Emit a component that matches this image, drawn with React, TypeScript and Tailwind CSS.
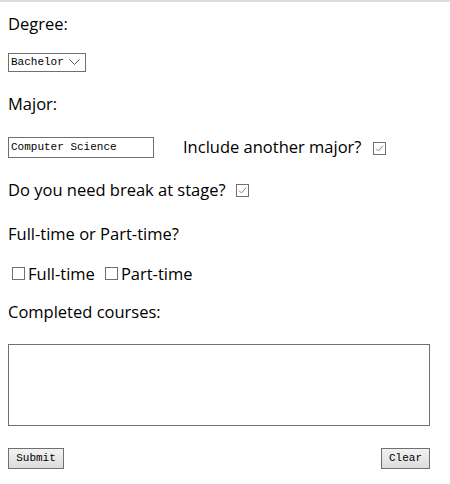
import React from 'react';

const Box: React.FC<{ checked?: boolean }> = ({ checked }) => (
    <span className="inline-flex items-center justify-center w-[13px] h-[13px] border border-[#707070] bg-white shrink-0">
        {checked && (
            <svg width="9" height="9" viewBox="0 0 9 9" fill="none">
                <path d="M1 4.5 L3.5 7 L8 1.5" stroke="#8a8a8a" strokeWidth="1" />
            </svg>
        )}
    </span>
);

const App: React.FC = () => {
    return (
        <div className="w-[450px] h-[484px] bg-white border-t-2 border-[#dcdcdc] text-black text-[16.5px] font-['Open_Sans','Noto_Sans',sans-serif]">
            <form className="ml-2 w-[422px] flex flex-col">
                <div className="h-[44px] flex items-center">Degree:</div>

                <div className="mt-[7px] h-[19px] w-[78px] border border-[#707070] flex items-center justify-between pl-[2px] pr-[5px] font-['Liberation_Mono',monospace] text-[11px]">
                    <span>Bachelor</span>
                    <svg width="11" height="7" viewBox="0 0 11 7" fill="none">
                        <path d="M0.5 0.5 L5.5 5.5 L10.5 0.5" stroke="#555" strokeWidth="1" />
                    </svg>
                </div>

                <div className="mt-[14px] h-[36px] flex items-center">Major:</div>

                <div className="mt-[15px] h-[21px] flex items-center">
                    <div className="h-[21px] w-[146px] border border-[#707070] flex items-center pl-[2px] font-['Liberation_Mono',monospace] text-[11px]">
                        Computer Science
                    </div>
                    <span className="ml-[29px]">Include another major?</span>
                    <span className="ml-[12px]"><Box checked /></span>
                </div>

                <div className="mt-[14px] h-[36px] flex items-center gap-[10px]">
                    <span>Do you need break at stage?</span>
                    <Box checked />
                </div>

                <div className="mt-[8px] h-[36px] flex items-center">Full-time or Part-time?</div>

                <div className="mt-[4px] h-[36px] flex items-center">
                    <span className="ml-[4px]"><Box /></span>
                    <span className="ml-[3px]">Full-time</span>
                    <span className="ml-[10px]"><Box /></span>
                    <span className="ml-[3px]">Part-time</span>
                </div>

                <div className="mt-[2px] h-[36px] flex items-center">Completed courses:</div>

                <textarea className="mt-[14px] h-[82px] w-[422px] border border-[#707070] resize-none outline-none" />

                <div className="mt-[22px] flex justify-between">
                    <button type="button" className="h-[21px] w-[56px] border border-[#707070] bg-gradient-to-b from-[#f2f2f2] to-[#dcdcdc] font-['Liberation_Mono',monospace] text-[11px]">
                        Submit
                    </button>
                    <button type="button" className="h-[21px] w-[49px] border border-[#707070] bg-gradient-to-b from-[#f2f2f2] to-[#dcdcdc] font-['Liberation_Mono',monospace] text-[11px]">
                        Clear
                    </button>
                </div>
            </form>
        </div>
    );
};

export default App;
